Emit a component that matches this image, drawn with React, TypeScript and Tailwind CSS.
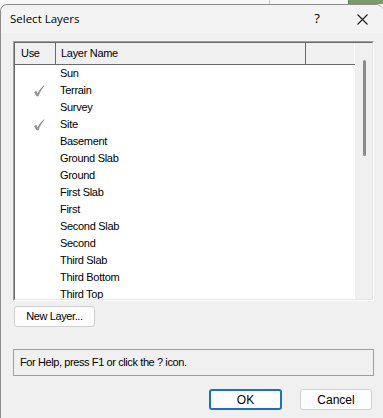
import React from "react";

const layers = [
  { name: "Sun", used: false },
  { name: "Terrain", used: true },
  { name: "Survey", used: false },
  { name: "Site", used: true },
  { name: "Basement", used: false },
  { name: "Ground Slab", used: false },
  { name: "Ground", used: false },
  { name: "First Slab", used: false },
  { name: "First", used: false },
  { name: "Second Slab", used: false },
  { name: "Second", used: false },
  { name: "Third Slab", used: false },
  { name: "Third Bottom", used: false },
  { name: "Third Top", used: false },
];

// grey "in use" tick, drawn like the old bitmap
function Tick() {
  return (
    <svg width="12" height="12" viewBox="0 0 12 12" className="block">
      <path
        d="M1.5 7.2 L3.2 6.2 L4.6 9.2 C6.2 5.6 8.4 2.8 11 0.8 C8.8 3.4 6.6 7 5.2 11 L3.8 11 Z"
        fill="#9a9a9a"
        stroke="#7a7a7a"
        strokeWidth="0.6"
        strokeLinejoin="round"
      />
    </svg>
  );
}

export default function App() {
  return (
    <div className="relative w-[383px] h-[418px] overflow-hidden bg-[#f5f6f8] font-['Liberation_Sans',Arial,sans-serif] text-black">
      {/* what is behind the dialog */}
      <div className="flex h-[4px]">
        <div className="w-[270px] bg-[#f7f7f7] border-r border-[#c8c8c8]" />
        <div className="w-[78px] bg-[#f7f7f7]" />
        <div className="flex-1 bg-[#7a9a6a] border-l border-[#5d7d50]" />
      </div>

      <div className="h-[414px] rounded-tl-[7px] rounded-tr-[7px] border-l border-t border-[#8c8c8c] bg-[#f0f0f0] flex flex-col">
        {/* title bar */}
        <div className="h-[28px] shrink-0 flex items-center bg-[#f3f3f3] rounded-t-[7px] pl-[9px] pr-[12px] text-[11.5px] font-['Open_Sans',sans-serif]">
          <span className="flex-1">Select Layers</span>
          <span className="w-[10px] text-[13px] mr-[35px] text-center">?</span>
          <svg width="11" height="11" viewBox="0 0 11 11" className="mr-[3px]">
            <path d="M0.5 0.5 L10.5 10.5 M10.5 0.5 L0.5 10.5" stroke="#1a1a1a" strokeWidth="1.1" />
          </svg>
        </div>

        {/* layer list */}
        <div className="mt-[8px] ml-[12px] w-[361px] h-[260px] shrink-0 border-t border-l border-[#a0a0a0] border-b border-r border-b-white border-r-white">
          <div className="h-full flex border-t border-l border-[#696969] border-b border-r border-b-[#e3e3e3] border-r-[#e3e3e3] bg-white">
            <div className="flex-1 flex flex-col overflow-hidden">
              <div className="h-[22px] shrink-0 flex bg-[#f0f0f0] border-b border-[#696969] text-[11px] tracking-[-0.3px]">
                <div className="w-[41px] border-r border-[#696969] pl-[6px] flex items-center">Use</div>
                <div className="w-[250px] border-r border-[#696969] pl-[5px] flex items-center">Layer Name</div>
                <div className="flex-1 border-r border-white" />
              </div>
              <div className="flex flex-col text-[11px] leading-[17px] tracking-[-0.3px]">
                {layers.map((l) => (
                  <div key={l.name} className="h-[17px] shrink-0 flex items-center">
                    <div className="w-[45px] flex justify-center pl-[2px]">{l.used && <Tick />}</div>
                    <span>{l.name}</span>
                  </div>
                ))}
              </div>
            </div>
            {/* scroll bar */}
            <div className="w-[17px] bg-[#f0f0f0] flex justify-center pt-[17px]">
              <div className="w-[3px] h-[96px] ml-[1px] rounded-full bg-[#8a8a8a]" />
            </div>
          </div>
        </div>

        <div className="mt-[5px] ml-[13px] flex">
          <button className="w-[81px] h-[21px] rounded-[3px] border border-[#d0d0d0] bg-[#fdfdfd] text-[11px] tracking-[-0.4px] flex items-center justify-center">
            New Layer...
          </button>
        </div>

        {/* help line */}
        <div className="mt-[22px] ml-[12px] w-[361px] h-[27px] shrink-0 border border-[#a0a0a0] flex items-center pl-[6px] text-[11px] tracking-[-0.4px]">
          For Help, press F1 or click the ? icon.
        </div>

        <div className="mt-[13px] flex justify-end gap-[18px] pr-[11px]">
          <button className="w-[73px] h-[21px] rounded-[3px] border-2 border-[#1f6fbf] bg-[#fdfdfd] text-[12px] flex items-center justify-center">
            OK
          </button>
          <button className="w-[72px] h-[21px] rounded-[3px] border border-[#d0d0d0] bg-[#fdfdfd] text-[12px] flex items-center justify-center">
            Cancel
          </button>
        </div>
      </div>
    </div>
  );
}
